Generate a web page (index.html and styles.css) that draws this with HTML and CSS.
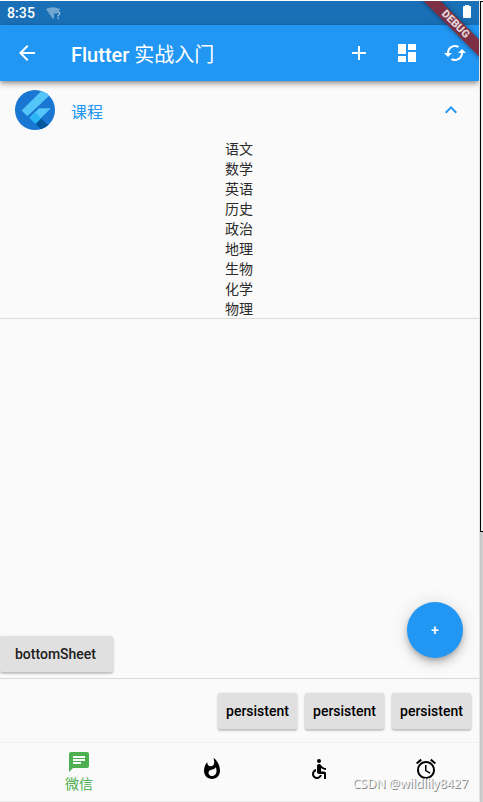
FILE: index.html
```html
<!DOCTYPE html>
<html lang="zh-CN">
<head>
<meta charset="utf-8">
<title>Flutter 实战入门</title>
<link rel="stylesheet" href="styles.css">
</head>
<body>
<main class="phone">
  <div class="status">
    <span class="time">8:35</span>
    <svg class="wifi" width="16" height="13" viewBox="0 0 16 13"><path d="M0 2Q7 -1.5 14 2L13 4H10L8 7V11L7 12Z" fill="#fff" opacity=".38"/><path d="M9.5 6.2Q10 4.8 11.7 4.8Q13.7 4.8 13.7 6.4Q13.7 7.4 12.2 8.3V9.4M12.2 10.5V12" fill="none" stroke="#fff" stroke-width="1.3" opacity=".6"/></svg>
    <svg class="battery" width="8" height="13" viewBox="0 0 8 13"><path d="M2 0h4v1h1.3q.7 0 .7.7v10.6q0 .7-.7.7H.7q-.7 0-.7-.7V1.7Q0 1 .7 1H2z" fill="#fff"/></svg>
  </div>
  <header class="appbar">
    <svg class="icon" viewBox="0 0 24 24"><path d="M20 11H7.83l5.59-5.59L12 4l-8 8 8 8 1.41-1.41L7.83 13H20v-2z"/></svg>
    <h1 class="title">Flutter <span class="title-cjk">实战入门</span></h1>
    <div class="actions">
      <svg class="icon" viewBox="0 0 24 24"><path d="M19 13h-6v6h-2v-6H5v-2h6V5h2v6h6v2z"/></svg>
      <svg class="icon" viewBox="0 0 24 24"><path d="M3 13h8V3H3v10zm0 8h8v-6H3v6zm10 0h8V11h-8v10zm0-18v6h8V3h-8z"/></svg>
      <svg class="icon" viewBox="0 0 24 24"><path d="M19 8l-4 4h3c0 3.31-2.69 6-6 6-1.01 0-1.97-.25-2.8-.7l-1.46 1.46C8.97 19.54 10.43 20 12 20c4.42 0 8-3.58 8-8h3l-4-4zM6 12c0-3.31 2.69-6 6-6 1.01 0 1.97.25 2.8.7l1.46-1.46C15.03 4.46 13.57 4 12 4c-4.42 0-8 3.58-8 8H1l4 4 4-4H6z"/></svg>
    </div>
  </header>
  <section class="content">
    <div class="tile">
      <svg class="avatar" viewBox="0 0 40 40">
        <defs><clipPath id="disc"><circle cx="20" cy="20" r="20"/></clipPath></defs>
        <g clip-path="url(#disc)">
          <path fill="#1976d2" d="M0 0h40v40H0z"/>
          <path fill="#54c5f8" d="M6.7 20.5L26 1.2H39L12.3 26.2z"/>
          <path fill="#54c5f8" d="M24 18.2h11.8L20.7 33.2 14.7 27.4z"/>
          <path fill="#29b6f6" d="M20.4 22.6l5.8 5.8-5.6 5.6-5.8-5.8z"/>
          <path fill="#01579b" d="M26.2 28.4L37 39H25.6l-5-5z"/>
        </g>
      </svg>
      <span class="tile-title">课程</span>
      <svg class="icon expand" viewBox="0 0 24 24"><path d="M12 8l-6 6 1.41 1.41L12 10.83l4.59 4.58L18 14z"/></svg>
    </div>
    <ul class="courses">
      <li>语文</li><li>数学</li><li>英语</li><li>历史</li><li>政治</li><li>地理</li><li>生物</li><li>化学</li><li>物理</li>
    </ul>
  </section>
  <div class="sheet"><button class="btn sheet-btn">bottomSheet</button></div>
  <div class="footer-buttons">
    <button class="btn">persistent</button>
    <button class="btn">persistent</button>
    <button class="btn">persistent</button>
  </div>
  <nav class="nav">
    <div class="item selected"><svg class="icon" viewBox="0 0 24 24"><path d="M20 2H4c-1.1 0-1.99.9-1.99 2L2 22l4-4h14c1.1 0 2-.9 2-2V4c0-1.1-.9-2-2-2zM6 9h12v2H6V9zm8 5H6v-2h8v2zm4-6H6V6h12v2z"/></svg><span>微信</span></div>
    <div class="item"><svg class="icon" viewBox="0 0 24 24"><path d="M13.5.67s.74 2.65.74 4.8c0 2.06-1.35 3.73-3.41 3.73-2.07 0-3.63-1.67-3.63-3.73l.03-.36C5.21 7.51 4 10.62 4 14c0 4.42 3.58 8 8 8s8-3.58 8-8C20 8.61 17.41 3.8 13.5.67zM11.71 19c-1.78 0-3.22-1.4-3.22-3.14 0-1.62 1.05-2.76 2.81-3.12 1.77-.36 3.6-1.21 4.62-2.58.39 1.29.59 2.65.59 4.04 0 2.65-2.15 4.8-4.8 4.8z"/></svg></div>
    <div class="item"><svg class="icon" viewBox="0 0 24 24"><circle cx="12" cy="4" r="2"/><path d="M19 13v-2c-1.54.02-3.09-.75-4.07-1.83l-1.29-1.43c-.17-.19-.38-.34-.61-.45-.01 0-.01-.01-.02-.01H13c-.35-.2-.75-.3-1.19-.26C10.76 7.11 10 8.04 10 9.09V15c0 1.1.9 2 2 2h5v5h2v-5.5c0-1.1-.9-2-2-2h-3v-3.45c1.29 1.07 3.25 1.94 5 1.95zm-6.17 5c-.41 1.16-1.52 2-2.83 2-1.66 0-3-1.34-3-3 0-1.31.84-2.41 2-2.83V12.1c-2.28.46-4 2.48-4 4.9 0 2.76 2.24 5 5 5 2.42 0 4.44-1.72 4.9-4h-2.07z"/></svg></div>
    <div class="item"><svg class="icon" viewBox="0 0 24 24"><path d="M22 5.72l-4.6-3.86-1.29 1.53 4.6 3.86L22 5.72zM7.88 3.39L6.6 1.86 2 5.71l1.29 1.53 4.59-3.85zM12.5 8H11v6l4.75 2.85.75-1.23-4-2.37V8zM12 4c-4.97 0-9 4.03-9 9s4.02 9 9 9c4.97 0 9-4.03 9-9s-4.03-9-9-9zm0 16c-3.87 0-7-3.13-7-7s3.13-7 7-7 7 3.13 7 7-3.13 7-7 7z"/></svg></div>
  </nav>
  <button class="fab">+</button>
  <div class="debug">DEBUG</div>
</main>
<aside class="edge"><div class="panel"></div><div class="shade"></div></aside>
<div class="watermark">CSDN @wildlily8427</div>
</body>
</html>
```

FILE: styles.css
```css
* { box-sizing: border-box; }
body {
  margin: 0;
  width: 483px;
  height: 802px;
  padding-top: 1px;
  display: flex;
  position: relative;
  overflow: hidden;
  background: #fff;
  font-family: Roboto, "Noto Sans CJK SC", sans-serif;
}
.phone {
  position: relative;
  width: 479px;
  height: 801px;
  overflow: hidden;
  display: flex;
  flex-direction: column;
  background: #fafafa;
}
.icon { width: 24px; height: 24px; fill: currentColor; flex: none; display: block; }
.status {
  height: 24px;
  flex: none;
  background: #1a70b7;
  color: #fff;
  display: flex;
  align-items: center;
  padding: 0 8px 0 7px;
}
.time { font-size: 14px; font-weight: 500; letter-spacing: .1px; line-height: 24px; }
.wifi { margin-left: 11px; }
.battery { margin-left: auto; margin-bottom: 3px; }
.appbar {
  height: 56px;
  flex: none;
  background: #2196f3;
  color: #fff;
  display: flex;
  align-items: center;
  padding: 0 12px 0 15px;
  box-shadow: 0 2px 4px -1px rgba(0,0,0,.3), 0 4px 5px rgba(0,0,0,.16), 0 1px 9px rgba(0,0,0,.1);
  z-index: 1;
}
.title { margin: 0 0 0 32px; padding-top: 4px; font-size: 20px; font-weight: 500; line-height: 28px; }
.title-cjk { font-weight: 400; }
.actions { display: flex; gap: 24px; margin-left: auto; }
.content { flex: 1; min-height: 0; }
.tile {
  height: 58px;
  display: flex;
  align-items: center;
  padding: 0 16px 0 15px;
  color: #2196f3;
}
.avatar { width: 40px; height: 40px; }
.tile-title { margin: 1px 0 0 16px; font-size: 16px; }
.expand { margin-left: auto; }
.courses {
  list-style: none;
  margin: 0;
  padding: 0 1px 0 0;
  height: 180px;
  text-align: center;
  color: #2b2b2b;
  font-size: 14px;
  line-height: 20px;
  border-bottom: 1px solid #dadada;
}
.btn {
  height: 36px;
  border: 0;
  border-radius: 2px;
  padding: 0 8px;
  background: #e0e0e0;
  color: #000;
  font: 500 14px/36px Roboto, sans-serif;
  box-shadow: 0 2px 2px rgba(0,0,0,.13), 0 1px 3px rgba(0,0,0,.18);
}
.sheet { height: 43px; flex: none; border-bottom: 1px solid #d9d9d9; display: flex; align-items: flex-start; }
.sheet-btn { width: 113px; padding: 0 15px; text-align: left; color: #212121; }
.footer-buttons {
  height: 63px;
  flex: none;
  display: flex;
  justify-content: flex-end;
  gap: 8px;
  padding: 14px 8px 0 0;
}
.footer-buttons .btn { width: 79px; padding: 0; }
.nav {
  height: 60px;
  flex: none;
  display: flex;
  border-top: 1px solid #f0f0f0;
  border-bottom: 1px solid #eee;
}
.item { flex: 1; display: flex; flex-direction: column; align-items: center; padding-top: 14px; }
.item.selected { flex: 0 0 158px; padding-top: 7px; color: #4caf50; font-size: 14px; line-height: 20px; }
.fab {
  position: absolute;
  right: 16px;
  top: 601px;
  width: 56px;
  height: 56px;
  border: 0;
  border-radius: 50%;
  padding: 0;
  background: #2196f3;
  color: #fff;
  font: 500 14px/56px Roboto, sans-serif;
  box-shadow: 0 3px 5px -1px rgba(0,0,0,.2), 0 6px 10px rgba(0,0,0,.14), 0 1px 18px rgba(0,0,0,.12);
}
.debug {
  position: absolute;
  z-index: 2;
  left: 396px;
  top: 18px;
  width: 120px;
  height: 12px;
  padding-right: 2px;
  background: #7d3044;
  color: #e4d5da;
  font: 900 10.8px/12px Roboto, sans-serif;
  text-align: center;
  transform: rotate(45deg);
  box-shadow: 0 0 5px rgba(0,0,0,.45);
}
.edge { width: 4px; height: 801px; display: flex; flex-direction: column; padding-left: 1px; background: #e4e4e4; }
.panel { height: 531px; border-left: 1px solid #000; border-top: 1px solid #000; border-bottom: 1px solid #000; background: #f0f0f0; }
.shade { flex: 1; background: linear-gradient(90deg, #c4c4c4, #d4d4d4); }
.watermark {
  position: absolute;
  z-index: 3;
  right: 15px;
  top: 775px;
  font: 12.4px/18px "Noto Sans", sans-serif;
  color: #f4f4f4;
  text-shadow: 1px 1px 0 #888;
  white-space: nowrap;
}
```
